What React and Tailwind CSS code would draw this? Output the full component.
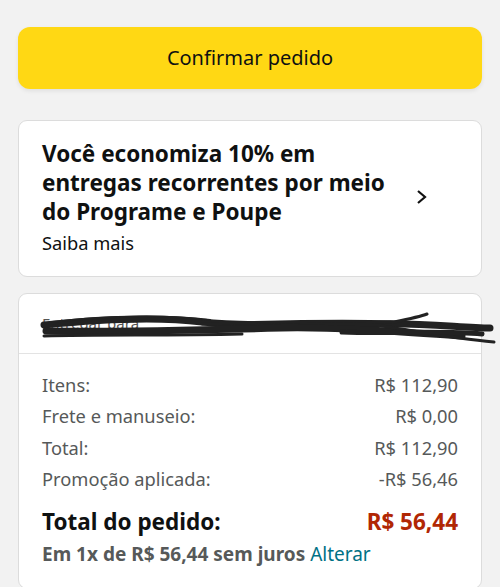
import React from "react";

const rows = [
  { label: "Itens:", value: "R$ 112,90" },
  { label: "Frete e manuseio:", value: "R$ 0,00" },
  { label: "Total:", value: "R$ 112,90" },
  { label: "Promoção aplicada:", value: "-R$ 56,46" },
];

const Scribble = () => (
  <svg
    width="450"
    height="34"
    viewBox="0 0 450 34"
    fill="none"
    className="absolute left-0 top-0 overflow-visible"
  >
    <g stroke="#222" strokeLinecap="round">
      <path d="M2 14 C60 8 120 6 160 11 C200 15 260 14 330 13 C380 11 420 17 448 17" strokeWidth="7" />
      <path d="M4 20 C80 21 160 19 240 17 C300 16 360 21 420 25" strokeWidth="7" />
      <path d="M10 11 C70 4 130 4 168 9" strokeWidth="2" />
      <path d="M160 13 C220 11 300 9 352 11 C372 7 380 5 385 3" strokeWidth="3" />
      <path d="M340 15 C380 21 410 27 452 31" strokeWidth="3" />
      <path d="M300 21 C350 23 400 19 440 23" strokeWidth="5" />
      <path d="M2 25 C60 23 120 25 200 23" strokeWidth="3" />
    </g>
  </svg>
);

export default function App() {
  return (
    <div
      className="min-h-[587px] w-[500px] bg-[#f2f2f2] px-[18px] pt-[27px] pb-6 overflow-hidden"
      style={{ fontFamily: '"Noto Sans", "Open Sans", sans-serif' }}
    >
      <button className="w-full h-[62px] rounded-[12px] bg-[#ffd814] text-[#0f1111] text-[20px] shadow-[0_2px_4px_rgba(0,0,0,0.08)]">
        Confirmar pedido
      </button>

      <div className="mt-[31px] rounded-[9px] border border-[#dcdcdc] bg-white pl-[23px] pt-[18px] pb-[21px] flex items-center">
        <div className="flex-1">
          <p className="text-[22.5px] font-bold leading-[29px] text-[#0f1111]">
            Você economiza 10% em entregas recorrentes por meio do Programe e Poupe
          </p>
          <p className="mt-[4px] text-[18.3px] leading-[25px] text-[#0f1111]">Saiba mais</p>
        </div>
        <svg width="14" height="16" viewBox="0 0 14 16" className="ml-[10px] mr-[52px] shrink-0">
          <path d="M3 2 L10 8 L3 14" stroke="#111" strokeWidth="2.2" fill="none" />
        </svg>
      </div>

      <div className="mt-[16px] rounded-[9px] border border-[#dcdcdc] bg-white">
        <div className="relative h-[60px] border-b border-[#e3e3e3] px-[23px]">
          <div className="relative top-[17px] h-[34px]">
            <span className="text-[15px] text-[#555]">Entregar para</span>
            <Scribble />
          </div>
        </div>
        <div className="px-[23px] pt-[15px] pb-[20px]">
          {rows.map((r) => (
            <div key={r.label} className="flex justify-between text-[18.3px] leading-[31.3px] text-[#565959]">
              <span>{r.label}</span>
              <span>{r.value}</span>
            </div>
          ))}
          <div className="mt-[12px] flex justify-between text-[22.5px] font-bold leading-[31px]">
            <span className="text-[#0f1111]">Total do pedido:</span>
            <span className="text-[#b12704]">R$ 56,44</span>
          </div>
          <p className="mt-[3px] text-[19px] leading-[28px] font-bold text-[#565959]">
            Em 1x de R$ 56,44 sem juros{" "}
            <span className="font-normal text-[#007185]">Alterar</span>
          </p>
        </div>
      </div>
    </div>
  );
}
